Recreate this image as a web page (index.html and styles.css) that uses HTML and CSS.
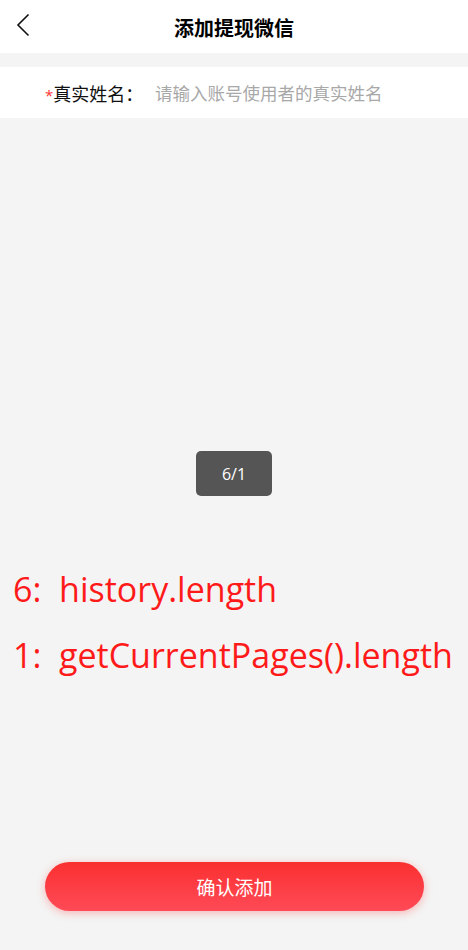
FILE: index.html
```html
<!DOCTYPE html>
<html lang="zh">
<head>
    <meta charset="UTF-8">
    <meta name="viewport" content="width=device-width, initial-scale=1.0">
    <title>添加提现微信</title>
    <link rel="stylesheet" href="styles.css">
</head>
<body>
    <div class="page">
        <div class="nav-bar">
            <span class="back">
                <svg width="14" height="24" viewBox="0 0 14 24"><path d="M12.5 1.5 L2 12 L12.5 22.5" fill="none" stroke="#111" stroke-width="1.6"/></svg>
            </span>
            <div class="nav-title">添加提现微信</div>
        </div>

        <div class="form-row">
            <label class="form-label"><span class="required">*</span>真实姓名：</label>
            <input type="text" class="form-input" placeholder="请输入账号使用者的真实姓名">
        </div>

        <div class="content">
            <div class="toast">6/1</div>
            <div class="debug">
                <p>6:&nbsp; history.length</p>
                <p>1:&nbsp; getCurrentPages().length</p>
            </div>
        </div>

        <div class="footer">
            <button class="submit-btn">确认添加</button>
        </div>
    </div>
</body>
</html>
```

FILE: styles.css
```css
* {
    margin: 0;
    padding: 0;
    box-sizing: border-box;
    font-family: "Open Sans", "Noto Sans CJK SC", sans-serif;
}

body {
    background: #f4f4f4;
    width: 468px;
    height: 950px;
    overflow: hidden;
}

.page {
    display: flex;
    flex-direction: column;
    height: 950px;
}

.nav-bar {
    position: relative;
    height: 53px;
    background: #fff;
    display: flex;
    align-items: center;
    justify-content: center;
}

.back {
    position: absolute;
    left: 16px;
    top: 13px;
}

.nav-title {
    font-size: 20px;
    font-weight: 700;
    color: #000;
    margin-top: 1px;
}

.form-row {
    margin-top: 14px;
    height: 51px;
    background: #fff;
    display: flex;
    align-items: center;
    padding-left: 45px;
}

.form-label {
    font-size: 18px;
    color: #111;
    width: 110px;
}

.required {
    color: #f33;
    font-size: 15px;
}

.form-input {
    flex: 1;
    border: none;
    outline: none;
    background: transparent;
    font-size: 17.5px;
    color: #333;
}

.form-input::placeholder {
    color: #a8a8a8;
}

.content {
    flex: 1;
    display: flex;
    flex-direction: column;
    align-items: center;
    padding-top: 333px;
}

.toast {
    width: 76px;
    height: 45px;
    background: #555;
    border-radius: 5px;
    color: #fff;
    font-size: 16px;
    display: flex;
    align-items: center;
    justify-content: center;
}

.debug {
    align-self: stretch;
    padding-left: 13px;
    margin-top: 60px;
    color: #ff1a1a;
    font-size: 34px;
    line-height: 66px;
}

.footer {
    padding: 0 44px 39px 45px;
}

.submit-btn {
    width: 100%;
    height: 49px;
    border: none;
    border-radius: 25px;
    background: linear-gradient(to bottom, #fa3030, #ff4a57);
    box-shadow: 0 2px 8px rgba(255, 60, 60, 0.35);
    color: #fff;
    font-size: 19px;
}
```
